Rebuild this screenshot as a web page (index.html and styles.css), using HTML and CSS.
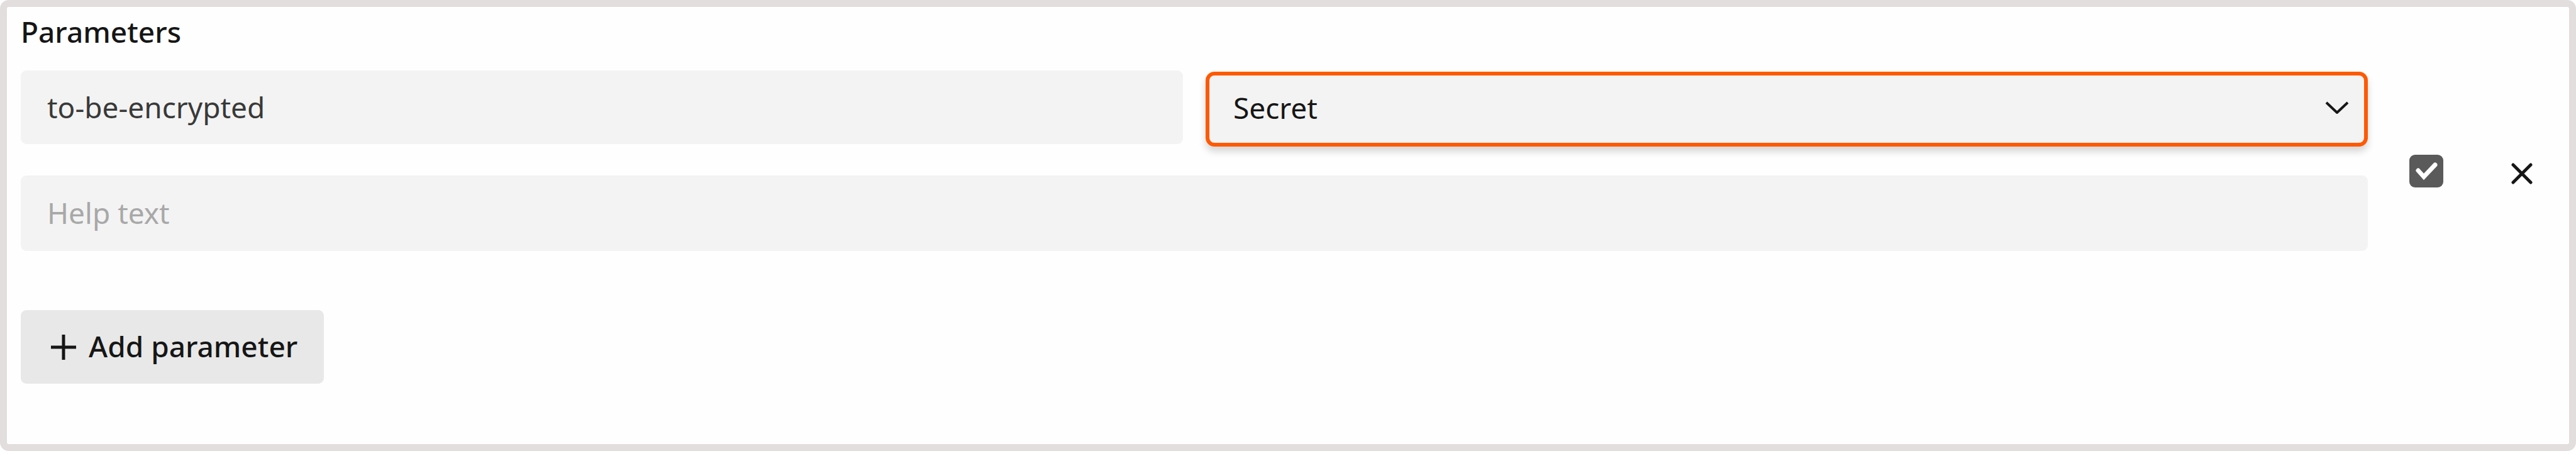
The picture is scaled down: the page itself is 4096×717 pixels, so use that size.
FILE: index.html
```html
<!DOCTYPE html>
<html lang="en">
<head>
<meta charset="utf-8">
<title>Parameters</title>
<link rel="stylesheet" href="styles.css">
</head>
<body>
<form class="panel">
  <h2 class="title">Parameters</h2>
  <div class="parameter">
    <div class="fields">
      <div class="row">
        <input class="field" type="text" value="to-be-encrypted" aria-label="Parameter name">
        <div class="select-wrap">
          <select class="field select" aria-label="Parameter type">
            <option>Secret</option>
          </select>
          <svg class="chevron" viewBox="0 0 38 20" aria-hidden="true"><path d="M2 2 19 18 36 2"/></svg>
        </div>
      </div>
      <input class="field help" type="text" placeholder="Help text" aria-label="Help text">
    </div>
    <div class="actions">
      <label class="check">
        <input class="check-input" type="checkbox" checked aria-label="Required">
        <svg class="check-mark" viewBox="0 0 54 52" aria-hidden="true"><path d="M14 25 23 35 41 16"/></svg>
      </label>
      <button class="remove" type="button" aria-label="Remove parameter">
        <svg class="remove-icon" viewBox="0 0 34 34" aria-hidden="true"><path d="M3 3 31 31M31 3 3 31"/></svg>
      </button>
    </div>
  </div>
  <button class="add" type="button">
    <svg class="add-icon" viewBox="0 0 40 40" aria-hidden="true"><path d="M20 0V40M0 20H40"/></svg>
    <span class="add-label">Add parameter</span>
  </button>
</form>
</body>
</html>
```
FILE: styles.css
```css
* {
  box-sizing: border-box;
}

body {
  margin: 0;
  background: #fff;
  color: #161616;
  font-family: "Noto Sans", "Open Sans", sans-serif;
  font-size: 46px;
  line-height: 64px;
}

.panel {
  min-height: 100vh;
  padding: 7px 22px 24px;
  border: 11px solid #e2dedd;
  border-radius: 14px;
  background: #fefefe;
}

.title {
  margin: 0 0 30px;
  font-size: 46px;
  font-weight: 500;
}

.parameter {
  display: flex;
  margin-bottom: 94px;
}

.fields {
  display: grid;
  flex: 1;
  gap: 46px;
}

.row {
  display: grid;
  grid-template-columns: 1fr 1fr;
  column-gap: 36px;
  min-height: 121px;
}

.field {
  width: 100%;
  height: 117px;
  padding: 0 42px 2px;
  border: 0;
  border-radius: 9px;
  background: #f3f3f3;
  color: #393939;
  font: inherit;
}

.field::placeholder {
  color: #a8a8a8;
  opacity: 1;
}

.help {
  height: 120px;
}

.select-wrap {
  position: relative;
  align-self: end;
  height: 119px;
}

.select {
  height: 119px;
  padding: 0 38px 6px;
  border: 6px solid #ff5900;
  border-radius: 14px;
  box-shadow: 0 8px 12px rgba(0, 0, 0, 0.16);
  color: #161616;
  appearance: none;
  outline: 0;
}

.chevron {
  position: absolute;
  top: 47px;
  right: 30px;
  width: 38px;
  height: 20px;
  pointer-events: none;
}

.chevron,
.check-mark,
.remove-icon,
.add-icon {
  fill: none;
  stroke: #161616;
  stroke-width: 5;
  stroke-linejoin: round;
}

.chevron {
  stroke-width: 4;
}

.actions {
  display: flex;
  align-items: center;
  gap: 108px;
  padding: 32px 36px 0 66px;
}

.check {
  display: grid;
}

.check-input,
.check-mark {
  grid-area: 1 / 1;
  width: 54px;
  height: 52px;
  margin: 0;
}

.check-input {
  border-radius: 9px;
  background: #5a5a5a;
  appearance: none;
}

.check-mark {
  stroke: #fff;
  stroke-width: 7;
  stroke-linecap: round;
  stroke-linejoin: miter;
  pointer-events: none;
}

.remove {
  display: flex;
  padding: 8px 0 0;
  border: 0;
  background: none;
}

.remove-icon {
  width: 34px;
  height: 34px;
  stroke-linecap: round;
}

.add {
  display: inline-flex;
  align-items: center;
  gap: 20px;
  height: 117px;
  padding: 0 42px 0 48px;
  border: 0;
  border-radius: 9px;
  background: #e8e8e8;
  color: #161616;
  font: inherit;
  font-weight: 500;
}

.add-icon {
  width: 40px;
  height: 40px;
}

.add-label {
  padding-bottom: 3px;
}
```
